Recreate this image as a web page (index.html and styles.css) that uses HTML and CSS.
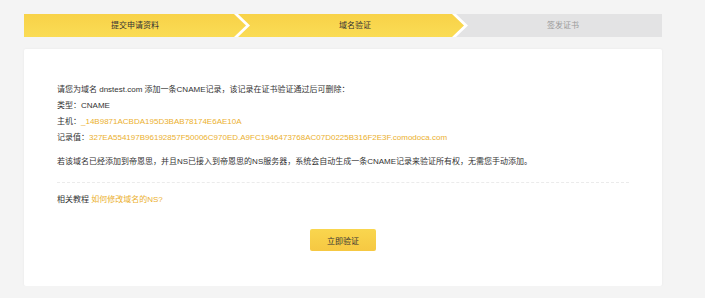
FILE: index.html
```html
<!DOCTYPE html>
<html lang="zh-CN">
<head>
<meta charset="utf-8">
<title>域名验证</title>
<link rel="stylesheet" href="styles.css">
</head>
<body>
<div class="page">
  <div class="steps">
    <div class="step step-first done">提交申请资料</div>
    <div class="step step-mid done">域名验证</div>
    <div class="step step-last">签发证书</div>
  </div>
  <div class="card">
    <div class="info">
      <p>请您为域名 dnstest.com 添加一条CNAME记录，该记录在证书验证通过后可删除：</p>
      <p>类型：CNAME</p>
      <p>主机：<span class="hl">_14B9871ACBDA195D3BAB78174E6AE10A</span></p>
      <p>记录值：<span class="hl">327EA554197B96192857F50006C970ED.A9FC1946473768AC07D0225B316F2E3F.comodoca.com</span></p>
    </div>
    <p class="note">若该域名已经添加到帝恩思，并且NS已接入到帝恩思的NS服务器，系统会自动生成一条CNAME记录来验证所有权，无需您手动添加。</p>
    <div class="divider"></div>
    <p class="tutorial">相关教程 <a class="hl" href="#">如何修改域名的NS?</a></p>
    <div class="actions">
      <button class="btn" type="button">立即验证</button>
    </div>
  </div>
</div>
</body>
</html>
```
FILE: styles.css
```css
* { box-sizing: border-box; }
html, body {
  margin: 0;
  padding: 0;
  background: #f4f4f4;
}
body {
  font-family: "Liberation Sans", "Noto Sans CJK SC", sans-serif;
  font-size: 8px;
  color: #333;
}
.page {
  width: 638px;
  margin-left: 24px;
  padding-top: 14px;
}
.steps {
  display: flex;
  height: 23px;
  background: #fff;
}
.step {
  height: 23px;
  line-height: 23px;
  text-align: center;
  font-size: 8px;
  color: #333;
}
.step.done {
  background: linear-gradient(180deg, #f8d248 0%, #fadc55 100%);
}
.step-first {
  width: 222px;
  clip-path: polygon(0 0, calc(100% - 12px) 0, 100% 50%, calc(100% - 12px) 100%, 0 100%);
}
.step-mid {
  width: 226px;
  margin-left: -8px;
  padding-left: 8px;
  clip-path: polygon(0 0, calc(100% - 12px) 0, 100% 50%, calc(100% - 12px) 100%, 0 100%, 12px 50%);
}
.step-last {
  flex: 1;
  margin-left: -8px;
  padding-left: 8px;
  background: #e3e3e4;
  color: #999;
  clip-path: polygon(0 0, 100% 0, 100% 100%, 0 100%, 12px 50%);
}
.card {
  margin-top: 12px;
  background: #fff;
  border-radius: 2px;
  box-shadow: 0 0 3px rgba(0, 0, 0, 0.05);
  padding: 33px 33px 35px;
}
.card p {
  margin: 0;
  line-height: 16px;
}
.hl {
  color: #ebb02e;
  text-decoration: none;
}
.note {
  margin-top: 8px !important;
}
.divider {
  margin-top: 12px;
  border-top: 1px dashed #ebebeb;
}
.tutorial {
  margin-top: 9px !important;
}
.actions {
  display: flex;
  justify-content: center;
  margin-top: 21px;
}
.btn {
  width: 66px;
  height: 22px;
  border: none;
  border-radius: 2px;
  background: linear-gradient(180deg, #f9d64e 0%, #f6c842 100%);
  font-family: "Liberation Sans", "Noto Sans CJK SC", sans-serif;
  font-size: 8px;
  color: #333;
  padding: 0;
  cursor: pointer;
}
```
